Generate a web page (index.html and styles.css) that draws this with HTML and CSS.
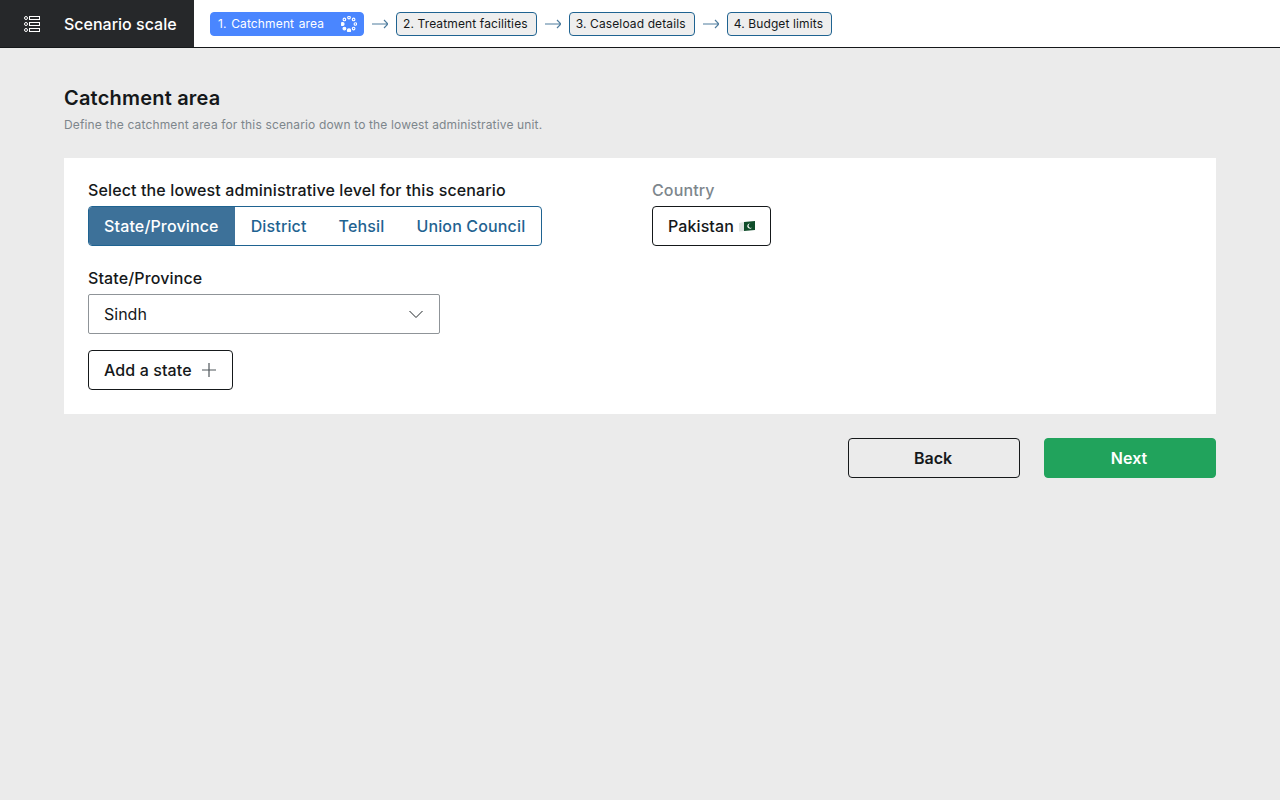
FILE: index.html
```html
<!DOCTYPE html>
<html lang="en">
<head>
<meta charset="utf-8">
<title>Scenario scale</title>
<link rel="stylesheet" href="styles.css">
</head>
<body>
<header class="topbar">
  <div class="brand">
    <svg class="brand-icon" width="16" height="16" viewBox="0 0 16 16" fill="none" stroke="#fff" stroke-width="1">
      <circle cx="2" cy="2" r="1.5"/><circle cx="2" cy="8" r="1.5"/><circle cx="2" cy="14" r="1.5"/>
      <rect x="5.5" y="0.5" width="10" height="3"/><rect x="5.5" y="6.5" width="10" height="3"/><rect x="5.5" y="12.5" width="10" height="3"/>
    </svg>
    <span class="brand-name">Scenario scale</span>
  </div>
  <nav class="steps">
    <div class="step step-active">
      <span>1. Catchment area</span>
      <svg class="spinner" width="16" height="16" viewBox="0 0 16 16" fill="none" stroke="#fff" stroke-width="1.100">
        <circle cx="8" cy="1.6" r="1.3"/><circle cx="12.6" cy="3.4" r="1.3"/><circle cx="14.4" cy="8" r="1.3"/><circle cx="12.6" cy="12.6" r="1.3"/>
        <circle cx="8" cy="14.4" r="1.6" fill="#fff"/><circle cx="3.4" cy="12.6" r="1.4" fill="#fff"/><circle cx="1.6" cy="8" r="1.5" fill="#fff"/><circle cx="3.4" cy="3.4" r="1.3"/>
      </svg>
    </div>
    <svg class="arrow" width="16" height="10" viewBox="0 0 16 10" fill="none" stroke="#4f7c9e" stroke-width="1.2"><path d="M0 5H15.500M12 1L16 5L12 9"/></svg>
    <div class="step">2. Treatment facilities</div>
    <svg class="arrow" width="16" height="10" viewBox="0 0 16 10" fill="none" stroke="#4f7c9e" stroke-width="1.2"><path d="M0 5H15.500M12 1L16 5L12 9"/></svg>
    <div class="step">3. Caseload details</div>
    <svg class="arrow" width="16" height="10" viewBox="0 0 16 10" fill="none" stroke="#4f7c9e" stroke-width="1.2"><path d="M0 5H15.500M12 1L16 5L12 9"/></svg>
    <div class="step">4. Budget limits</div>
  </nav>
</header>
<main class="content">
  <h1 class="title">Catchment area</h1>
  <p class="subtitle">Define the catchment area for this scenario down to the lowest administrative unit.</p>
  <section class="card">
    <div class="card-top">
      <div class="level-col">
        <div class="label">Select the lowest administrative level for this scenario</div>
        <div class="segments">
          <div class="segment segment-on">State/Province</div>
          <div class="segment">District</div>
          <div class="segment">Tehsil</div>
          <div class="segment">Union Council</div>
        </div>
      </div>
      <div class="country-col">
        <div class="label label-muted">Country</div>
        <div class="btn-outline country">Pakistan
          <svg class="flag" width="16" height="11" viewBox="0 0 16 11"><path d="M0 2L5 1V10L0 10.500Z" fill="#dfe4e2"/><path d="M5 1L16 0V9L5 10Z" fill="#0f4d2a"/><path d="M11.500 2.500A2.600 2.600 0 1 0 13 6.500A2.200 2.200 0 1 1 11.500 2.500Z" fill="#fff"/></svg>
        </div>
      </div>
    </div>
    <div class="label state-label">State/Province</div>
    <div class="select">
      <span>Sindh</span>
      <svg width="16" height="16" viewBox="0 0 16 16" fill="none" stroke="#21272a" stroke-width="1"><path d="M1.5 5L8 11.5L14.500 5"/></svg>
    </div>
    <div class="btn-outline add">Add a state
      <svg width="16" height="16" viewBox="0 0 16 16" fill="none" stroke="#4f565b" stroke-width="1.200"><path d="M8 1V15M1 8H15"/></svg>
    </div>
  </section>
  <div class="actions">
    <button class="action action-back" type="button">Back</button>
    <button class="action action-next" type="button">Next</button>
  </div>
</main>
</body>
</html>
```
FILE: styles.css
```css
* { box-sizing: border-box; }
html, body { margin: 0; padding: 0; }
body {
  width: 1280px;
  height: 800px;
  overflow: hidden;
  background: #ebebeb;
  color: #15181a;
  font-family: Inter, "Liberation Sans", sans-serif;
}
.topbar {
  display: flex;
  align-items: center;
  height: 48px;
  background: #fff;
  border-bottom: 1px solid #15181a;
}
.brand {
  display: flex;
  align-items: center;
  width: 194px;
  height: 47px;
  padding-left: 24px;
  background: #26282a;
  color: #fff;
}
.brand-name {
  margin-left: 24px;
  font-size: 16px;
  font-weight: 500;
}
.steps {
  display: flex;
  align-items: center;
  gap: 8px;
  margin-left: 16px;
}
.step {
  display: flex;
  align-items: center;
  height: 24px;
  padding: 0 8px 0 6px;
  border: 1px solid #1f6391;
  border-radius: 4px;
  background: #eeeeee;
  font-size: 12px;
  line-height: 16px;
  letter-spacing: 0.12px;
  color: #15181a;
}
.step-active {
  width: 154px;
  justify-content: space-between;
  padding: 0 6px 0 7px;
  border-color: #4a86ff;
  background: #4a86ff;
  color: #fff;
  letter-spacing: 0.14px;
  word-spacing: 1px;
}
.arrow { flex: none; }
.content { padding: 38px 64px 0; }
.title {
  margin: 0;
  font-size: 20px;
  line-height: 24px;
  font-weight: 600;
  letter-spacing: 0.2px;
}
.subtitle {
  margin: 7px 0 0;
  font-size: 12px;
  line-height: 16px;
  font-weight: 400;
  letter-spacing: 0.145px;
  color: #7d868c;
}
.card {
  margin-top: 25px;
  height: 256px;
  padding: 24px;
  background: #fff;
}
.card-top { display: flex; }
.level-col { width: 564px; }
.label {
  font-size: 16px;
  line-height: 16px;
  font-weight: 500;
  letter-spacing: 0.125px;
}
.label-muted { color: #7d868c; }
.segments {
  display: inline-flex;
  margin-top: 8px;
  height: 40px;
  border: 1px solid #1f6391;
  border-radius: 4px;
  overflow: hidden;
}
.segment {
  display: flex;
  align-items: center;
  padding: 0 16px;
  font-size: 16px;
  font-weight: 500;
  letter-spacing: 0.15px;
  color: #1f6391;
}
.segment-on { background: #3d7199; color: #fff; margin: -1px 0 -1px -1px; }
.btn-outline {
  display: inline-flex;
  align-items: center;
  height: 40px;
  padding: 0 15px;
  border: 1px solid #15181a;
  border-radius: 4px;
  background: #fff;
  font-size: 16px;
  font-weight: 550;
  letter-spacing: 0.1px;
}
.country { margin-top: 8px; gap: 5px; }
.state-label { margin-top: 24px; }
.select {
  display: flex;
  align-items: center;
  justify-content: space-between;
  width: 352px;
  height: 40px;
  margin-top: 8px;
  padding: 0 15px;
  border: 1px solid #8f9498;
  border-radius: 2px;
  font-size: 16px;
}
.add { margin-top: 16px; gap: 9px; }
.actions {
  display: flex;
  justify-content: flex-end;
  gap: 24px;
  margin-top: 24px;
}
.action {
  width: 172px;
  height: 40px;
  padding: 0 2px 0 0;
  border-radius: 4px;
  font-family: inherit;
  font-size: 16px;
  font-weight: 600;
}
.action-back { border: 1px solid #15181a; background: transparent; color: #15181a; }
.action-next { border: 1px solid #21a35c; background: #21a35c; color: #fff; }
```
